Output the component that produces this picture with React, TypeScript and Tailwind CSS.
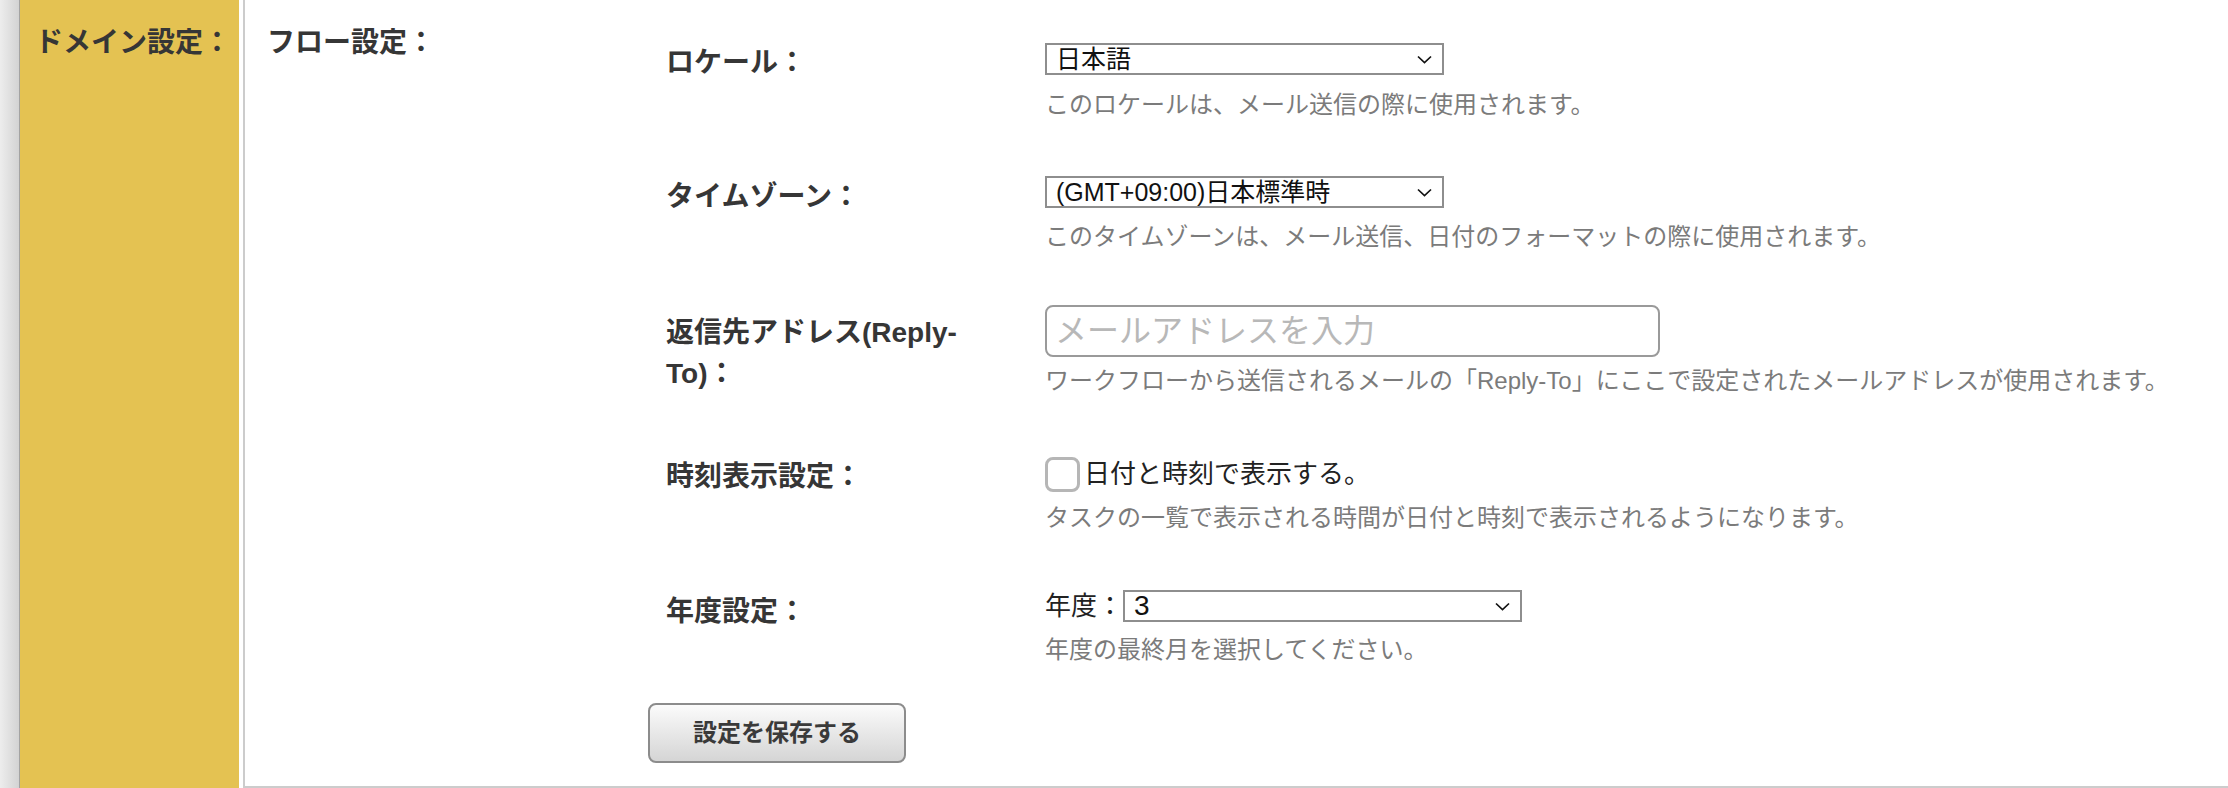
import React from 'react';

const Chevron: React.FC = () => (
  <svg width="15" height="9" viewBox="0 0 15 9" className="shrink-0">
    <polyline points="1,1.5 7.5,7.5 14,1.5" fill="none" stroke="#111" strokeWidth="1.7" />
  </svg>
);

const FakeSelect: React.FC<{ value: string; size?: string }> = ({ value, size = 'text-[25px]' }) => (
  <div
    className={`flex h-[32px] w-[399px] items-center justify-between border-2 border-[#8e8e8e] bg-white pl-[9px] pr-[10px] leading-none text-[#111] ${size}`}
  >
    <span>{value}</span>
    <Chevron />
  </div>
);

const Help: React.FC<{ children: React.ReactNode; className?: string }> = ({ children, className = '' }) => (
  <p className={`text-[24px] leading-[32px] text-[#7b7b7b] whitespace-nowrap ${className}`}>{children}</p>
);

const Label: React.FC<{ children: React.ReactNode; className?: string }> = ({ children, className = '' }) => (
  <div className={`w-[397px] shrink-0 pl-[18px] text-[28px] font-bold leading-[41px] text-[#363636] ${className}`}>
    {children}
  </div>
);

export default function App() {
  return (
    <div
      className="flex h-[788px] w-full overflow-hidden bg-white"
      style={{ fontFamily: '"Liberation Sans", "Noto Sans CJK JP", sans-serif' }}
    >
      {/* left page edge */}
      <div className="w-[20px] shrink-0 border-r border-[#a3a3a3] bg-gradient-to-r from-[#ededed] to-[#d3d3d3]" />

      {/* yellow section header */}
      <div className="w-[219px] shrink-0 bg-[#e4c252] pr-[8px] pt-[23px] text-right text-[28px] font-bold leading-[40px] text-[#363636]">
        ドメイン設定：
      </div>
      <div className="w-[4px] shrink-0" />

      {/* content */}
      <div className="flex min-w-0 flex-1 border-b-2 border-l-2 border-[#cccccc] pl-[22px]">
        <div className="w-[381px] shrink-0 pt-[23px] text-[28px] font-bold leading-[40px] text-[#363636]">
          フロー設定：
        </div>

        <div className="flex flex-col pt-[43px]">
          {/* locale */}
          <div className="flex">
            <Label className="-mt-[1px]">ロケール：</Label>
            <div>
              <FakeSelect value="日本語" />
              <Help className="mt-[14px]">このロケールは、メール送信の際に使用されます。</Help>
            </div>
          </div>

          {/* timezone */}
          <div className="mt-[55px] flex">
            <Label>タイムゾーン：</Label>
            <div>
              <FakeSelect value="(GMT+09:00)日本標準時" />
              <Help className="mt-[13px]">このタイムゾーンは、メール送信、日付のフォーマットの際に使用されます。</Help>
            </div>
          </div>

          {/* reply-to */}
          <div className="mt-[52px] flex">
            <Label className="pt-[7px]">
              返信先アドレス(Reply-
              <br />
              To)：
            </Label>
            <div>
              <input
                type="text"
                placeholder="メールアドレスを入力"
                className="block h-[52px] w-[615px] rounded-[8px] border-2 border-[#9a9a9a] bg-white px-[8px] text-[32px] text-[#222] outline-none placeholder:text-[#b8b8b8]"
              />
              <Help className="mt-[8px]">
                ワークフローから送信されるメールの「Reply-To」にここで設定されたメールアドレスが使用されます。
              </Help>
            </div>
          </div>

          {/* time display */}
          <div className="mt-[60px] flex">
            <Label className="-mt-[1px]">時刻表示設定：</Label>
            <div>
              <label className="flex h-[35px] items-center gap-[4px] text-[26px] text-[#222]">
                <span className="block h-[35px] w-[35px] rounded-[8px] border-[3px] border-[#b6b6b6] bg-white" />
                日付と時刻で表示する。
              </label>
              <Help className="mt-[10px]">タスクの一覧で表示される時間が日付と時刻で表示されるようになります。</Help>
            </div>
          </div>

          {/* fiscal year */}
          <div className="mt-[56px] flex">
            <Label className="pt-[1px]">年度設定：</Label>
            <div>
              <div className="flex items-center">
                <span className="w-[78px] text-[26px] leading-none text-[#222]">年度：</span>
                <FakeSelect value="3" size="text-[28px]" />
              </div>
              <Help className="mt-[12px]">年度の最終月を選択してください。</Help>
            </div>
          </div>

          <button
            type="button"
            className="mt-[37px] h-[60px] w-[258px] rounded-[8px] border-2 border-[#8c8c8c] bg-gradient-to-b from-[#fbfbfb] to-[#d5d5d5] text-[24px] font-bold text-[#3a3a3a]"
          >
            設定を保存する
          </button>
        </div>
      </div>
    </div>
  );
}
